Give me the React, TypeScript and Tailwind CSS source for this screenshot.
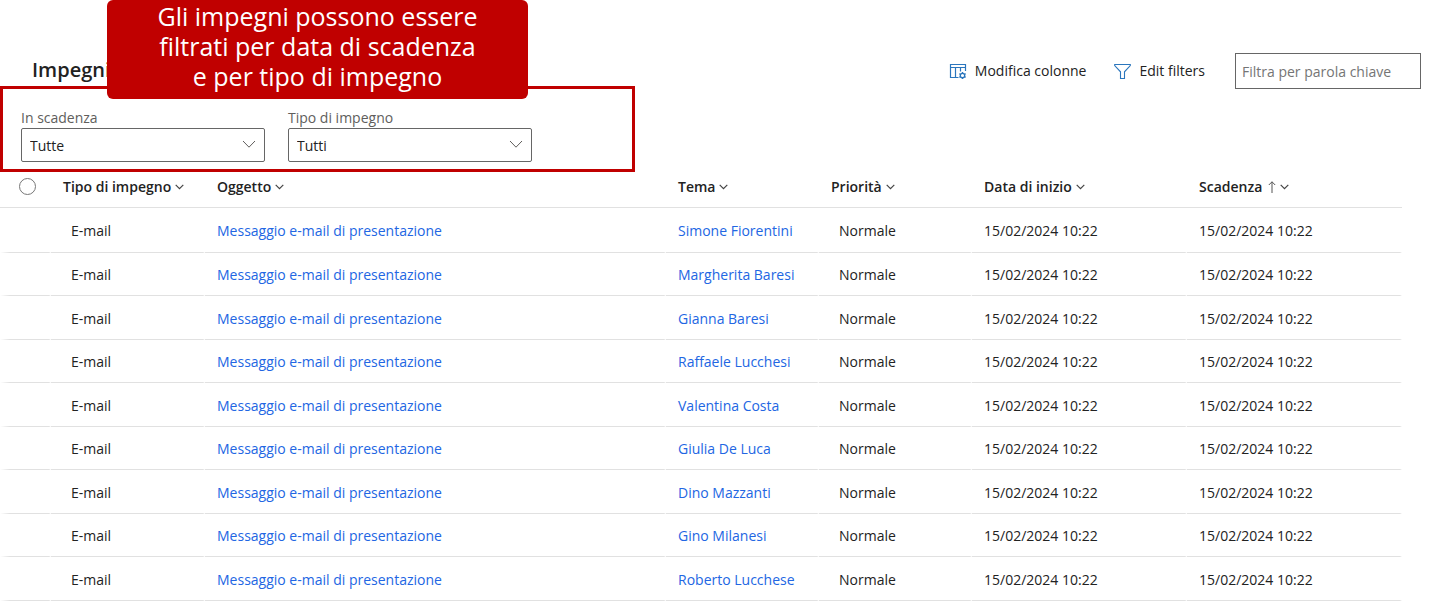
import type { ReactNode } from "react";

const SUBJECT = "Messaggio e-mail di presentazione";
const DATE = "15/02/2024 10:22";

const contacts = [
  "Simone Fiorentini",
  "Margherita Baresi",
  "Gianna Baresi",
  "Raffaele Lucchesi",
  "Valentina Costa",
  "Giulia De Luca",
  "Dino Mazzanti",
  "Gino Milanesi",
  "Roberto Lucchese",
];

function ColumnsIcon() {
  return (
    <svg width="18" height="17" viewBox="0 0 18 17" fill="none" stroke="#2b76bd">
      <path d="M9.5 14.5H1.5V1.5H16.5V8M1.5 4.5H16.5M6.5 4.5V14.5M11.5 4.5V8.5" strokeWidth="1.2" />
      <circle cx="13.5" cy="12.5" r="2.2" strokeWidth="1.3" />
      <path
        d="M13.5 8.9V10.2M13.5 14.8V16.1M10.4 10.7L11.5 11.3M15.5 13.7L16.6 14.3M10.4 14.3L11.5 13.7M15.5 11.3L16.6 10.7"
        strokeWidth="1.4"
      />
    </svg>
  );
}

function FilterIcon() {
  return (
    <svg width="17" height="17" viewBox="0 0 17 17" fill="none" stroke="#2b76bd">
      <path d="M0.7 1.5H16.3V2.6L10.5 8.8V15.5H6.5V8.8L0.7 2.6Z" strokeWidth="1.1" />
    </svg>
  );
}

function SmallChevron() {
  return (
    <svg width="9" height="6" viewBox="0 0 9 6" fill="none" stroke="#444">
      <path d="M0.7 0.8L4.5 4.6L8.3 0.8" strokeWidth="1.2" />
    </svg>
  );
}

function SortUp() {
  return (
    <svg width="8" height="12" viewBox="0 0 8 12" fill="none" stroke="#555">
      <path d="M4 12V0.8M0.8 4L4 0.8L7.2 4" />
    </svg>
  );
}

function FilterSelect({ id, label, value }: { id: string; label: string; value: string }) {
  return (
    <div className="w-[244px]">
      <label htmlFor={id} className="block h-5 text-sm leading-5 text-[#605e5c]">
        {label}
      </label>
      <div className="relative">
        <select
          id={id}
          className="block h-[34px] w-full appearance-none rounded-xs border border-[#666] bg-white px-2 pt-px text-sm text-[#222]"
        >
          <option>{value}</option>
        </select>
        <svg
          className="pointer-events-none absolute top-3 right-[9px]"
          width="14"
          height="9"
          viewBox="0 0 14 9"
          fill="none"
          stroke="#605e5c"
        >
          <path d="M1 1L7 7.2L13 1" />
        </svg>
      </div>
    </div>
  );
}

function HeadCell({ children, sorted }: { children: ReactNode; sorted?: boolean }) {
  return (
    <th className="border-b border-[#e1e1e1] pb-1.5 pl-3 text-left font-semibold">
      <button className="flex items-center gap-1 whitespace-nowrap">
        {children}
        {sorted && (
          <span className="ml-0.5">
            <SortUp />
          </span>
        )}
        <SmallChevron />
      </button>
    </th>
  );
}

const cell = "border-r-2 border-b border-r-white border-b-[#e1e1e1] whitespace-nowrap pt-0.5";

export default function App() {
  return (
    <main className="relative min-h-screen bg-white font-['Open_Sans','Noto_Sans',sans-serif] text-sm text-[#222]">
      {/* Header */}
      <header className="flex h-[86px] items-start justify-between pr-[9px] pl-8">
        <h1 className="pt-14 text-xl leading-7 font-semibold text-[#222]">Impegni</h1>
        <div className="flex items-center pt-[53px]">
          <button className="mr-7 flex items-center gap-2 whitespace-nowrap">
            <ColumnsIcon />
            Modifica colonne
          </button>
          <button className="mr-[30px] flex items-center gap-2 whitespace-nowrap">
            <FilterIcon />
            Edit filters
          </button>
          <input
            type="text"
            aria-label="Filtra per parola chiave"
            placeholder="Filtra per parola chiave"
            className="h-9 w-[186px] border border-[#666] px-1.5 placeholder:text-[#757575]"
          />
        </div>
      </header>

      {/* Filters */}
      <section className="flex h-[86px] w-[635px] gap-[23px] border-[3px] border-[#c00000] pt-[19px] pl-[18px]">
        <FilterSelect id="due" label="In scadenza" value="Tutte" />
        <FilterSelect id="type" label="Tipo di impegno" value="Tutti" />
      </section>

      {/* Callout */}
      <div className="absolute top-0 left-[107px] w-[421px] rounded-md bg-[#c00000] pt-px pb-2 text-center text-[25px] leading-[30px] text-white">
        Gli impegni possono essere
        <br />
        filtrati per data di scadenza
        <br />
        e per tipo di impegno
      </div>

      {/* Table */}
      <div className="pr-7">
        <table className="w-full table-fixed border-separate border-spacing-0">
          <colgroup>
            <col className="w-[51px]" />
            <col className="w-[154px]" />
            <col />
            <col className="w-[153px]" />
            <col className="w-[153px]" />
            <col className="w-[215px]" />
            <col className="w-[215px]" />
          </colgroup>
          <thead>
            <tr className="h-9">
              <th className="border-b border-[#e1e1e1] pb-1.5 pl-[19px] text-left">
                <input
                  type="radio"
                  aria-label="Seleziona tutto"
                  className="block size-[17px] appearance-none rounded-full border border-[#777]"
                />
              </th>
              <HeadCell>Tipo di impegno</HeadCell>
              <HeadCell>Oggetto</HeadCell>
              <HeadCell>Tema</HeadCell>
              <HeadCell>Priorità</HeadCell>
              <HeadCell>Data di inizio</HeadCell>
              <HeadCell sorted>Scadenza</HeadCell>
            </tr>
          </thead>
          <tbody>
            {contacts.map((name) => (
              <tr key={name} className="first:h-[45px]! odd:h-11 even:h-[43px]">
                <td className={`${cell} border-l-[10px] border-l-white`} />
                <td className={`${cell} pl-5`}>E-mail</td>
                <td className={`${cell} pl-3`}>
                  <a href="#" className="text-[#2266e3]">
                    {SUBJECT}
                  </a>
                </td>
                <td className={`${cell} pl-3`}>
                  <a href="#" className="text-[#2266e3]">
                    {name}
                  </a>
                </td>
                <td className={`${cell} pl-5`}>Normale</td>
                <td className={`${cell} pl-3`}>{DATE}</td>
                <td className={`${cell} pl-3`}>{DATE}</td>
              </tr>
            ))}
          </tbody>
        </table>
      </div>
    </main>
  );
}
